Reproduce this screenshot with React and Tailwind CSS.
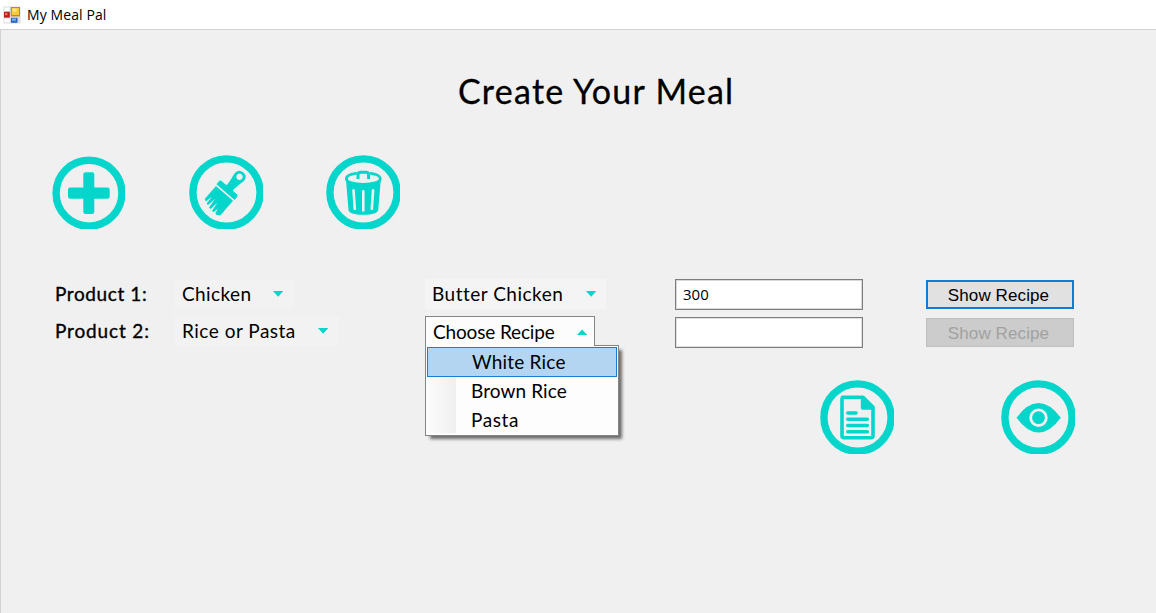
import React from "react";

const TEAL = "#05d6cb";

function RoundIcon({ label, className = "", children }) {
  return (
    <button aria-label={label} className={`block h-[74px] w-[74px] shrink-0 ${className}`}>
      <svg width="74" height="74" viewBox="0 0 74 74" fill={TEAL} className="block overflow-hidden">
        <circle cx="37.5" cy="37.5" r="33.6" fill="none" stroke={TEAL} strokeWidth="7.4" />
        {children}
      </svg>
    </button>
  );
}

function PlusIcon() {
  return (
    <button aria-label="Add product" className="mt-[1px] block h-[73px] w-[73px] shrink-0">
      <svg width="73" height="73" viewBox="0 0 73 73" fill={TEAL} className="block overflow-hidden">
        <circle cx="37" cy="37.2" r="32.9" fill="none" stroke={TEAL} strokeWidth="7.4" />
        <rect x="31.3" y="16.2" width="11" height="41.7" rx="2.2" />
        <rect x="16" y="31.5" width="41.7" height="11.3" rx="2.2" />
      </svg>
    </button>
  );
}

function Arrow({ up = false }) {
  return (
    <svg width="11" height="6" viewBox="0 0 11 6" fill={TEAL} className="block shrink-0">
      <path d={up ? "M0 6 L5 0.5 L10.3 6 Z" : "M0 0 L10.3 0 L5.2 5.8 Z"} />
    </svg>
  );
}

function AppIcon() {
  return (
    <svg width="18" height="18" viewBox="0 0 18 18" className="block">
      <rect x="0.5" y="0.5" width="17" height="17" fill="#dcdcdf" />
      <rect x="1.5" y="1.5" width="5" height="3.5" fill="#fff" />
      <rect x="1.5" y="12.5" width="5" height="4" fill="#fff" />
      <rect x="1" y="5.8" width="5.8" height="5.8" fill="#b81f12" />
      <rect x="2" y="6.8" width="2.5" height="2.5" fill="#e2705d" />
      <rect x="7.8" y="1" width="9.2" height="9.4" fill="#c48a12" />
      <rect x="8.8" y="2" width="7.2" height="7" fill="#f7ca38" />
      <rect x="9.5" y="2.6" width="4" height="3" fill="#ffe688" />
      <rect x="8" y="11.8" width="6.5" height="5" fill="#2b64c8" />
      <rect x="9" y="12.5" width="4" height="2.3" fill="#78aef2" />
    </svg>
  );
}

export default function App() {
  return (
    <div className="flex h-[613px] w-[1156px] flex-col overflow-hidden bg-[#f0f0f0] font-['Comic_Sans_MS',Lato,sans-serif] text-[19px] leading-[30px] text-black">
      <header className="flex h-[29px] shrink-0 items-center bg-white pl-[3px] font-['Open_Sans',sans-serif]">
        <AppIcon />
        <span className="ml-[6px] whitespace-nowrap text-[14px] leading-5 tracking-[0.1px]">My Meal Pal</span>
      </header>

      <main className="flex grow flex-col border-l border-t border-[#d2d2d2]">
        <h1 className="ml-[457px] mt-[41px] h-10 whitespace-nowrap text-[34px] leading-10 tracking-[1.25px] [-webkit-text-stroke:0.3px_black]">Create Your Meal</h1>

        <div className="mt-[44px] flex h-[74px] pl-[51px]">
          <PlusIcon />
          <RoundIcon label="Clear meal" className="ml-[64px]">
            <g transform="translate(37.6 35.9) rotate(41)">
              <path
                fillRule="evenodd"
                d="M-12 1.6 H12 V-2.2 Q12 -4.2 10 -4.2 H5.6 Q4.2 -4.2 4.2 -5.6 L5.4 -13.5 Q9 -24.8 0.6 -24.8 Q-7.8 -24.8 -4.6 -13.5 L-3.6 -5.6 Q-3.6 -4.2 -5 -4.2 H-10 Q-12 -4.2 -12 -2.2 Z M0.5 -22.3 A3.2 3.2 0 1 1 0.49 -22.3 Z"
              />
              <path d="M-11.3 3.2 H11.3 V22 Q8.4 26 6.2 24.2 L5 19 L4.2 24.8 L2 24.4 L0.8 15 L-0.2 24.2 L-2.4 24 L-3.4 13.5 L-4.8 23.2 L-6.8 22.4 L-7.2 14 L-8.8 21.6 L-11.3 20.4 Z" />
            </g>
          </RoundIcon>
          <RoundIcon label="Delete product" className="ml-[63px]">
            <path d="M20 25 Q37.5 33.5 54.8 25 L52.2 55 Q51.5 59.8 37.3 59.8 Q23.2 59.8 22.5 55 Z" />
            <path
              d="M29.8 18.3 C22.8 19.2 20.4 21.6 20.4 23.7 C20.4 27.3 28.5 29.4 37.3 29.4 C46.2 29.4 54.3 27.3 54.3 23.7 C54.3 21.5 51.6 19.3 44.8 18.3"
              fill="#f0f0f0"
              stroke={TEAL}
              strokeWidth="2.8"
              strokeLinecap="round"
            />
            <path d="M32 24 V20 Q32 17.2 34.6 17.2 H40 Q42.6 17.2 42.6 20 V24" fill="none" stroke={TEAL} strokeWidth="3" />
            <path d="M27.5 35.2 L28.8 53.8 M37.3 36.3 V55.5 M47.1 35.2 L45.8 53.8" fill="none" stroke="#f0f0f0" strokeWidth="2.6" strokeLinecap="round" />
          </RoundIcon>
        </div>

        <div className="mt-[50px] flex h-[69px] whitespace-nowrap">
          <div className="flex w-[120px] shrink-0 flex-col gap-[7px] pl-[54px] [-webkit-text-stroke:0.35px_black]">
            <div className="h-[30px] tracking-[0.6px]">Product 1:</div>
            <div className="h-[30px] tracking-[0.85px]">Product 2:</div>
          </div>

          <div className="ml-[53px] flex w-[251px] shrink-0 flex-col items-start gap-[7px]">
            <div className="flex h-[30px] w-[120px] items-center bg-[#f2f2f2] pl-[8px]">
              <span className="w-[91px] tracking-[0.4px]">Chicken</span>
              <Arrow />
            </div>
            <div className="flex h-[30px] w-[165px] items-center bg-[#f2f2f2] pl-[8px]">
              <span className="w-[136px] tracking-[0.5px]">Rice or Pasta</span>
              <Arrow />
            </div>
          </div>

          <div className="flex w-[250px] shrink-0 flex-col items-start gap-[7px]">
            <div className="flex h-[30px] w-[181px] items-center bg-[#f4f4f4] pl-[7px]">
              <span className="w-[154px] tracking-[0.5px]">Butter Chicken</span>
              <Arrow />
            </div>
            <div className="relative z-10 h-[30px] w-[170px] border border-b-0 border-[#858585] bg-[#fcfcfc]">
              <div className="flex h-[29px] items-center pl-[7px]">
                <span className="w-[144px] tracking-[-0.15px]">Choose Recipe</span>
                <Arrow up />
              </div>
              <div className="absolute left-[-1px] top-[28px] -z-10 h-[91px] w-[194px] border border-[#858585] bg-[#fdfdfd] px-[1px] pt-[1px] shadow-[4px_4px_3px_-1px_rgba(0,0,0,0.55)]">
                <div className="flex h-[30px] items-center border border-[#187ed2] bg-[#b3d5f2] pb-[1px] pl-[44px] tracking-[0.2px]">White Rice</div>
                <div className="h-[56px] bg-[linear-gradient(to_right,#fcfcfc_0px,#efefef_29px,#fdfdfd_29px)] pl-[44px]">
                  <div className="h-[29px] leading-[27px] tracking-[0.1px]">Brown Rice</div>
                  <div className="h-[27px] leading-[27px] tracking-[0.6px]">Pasta</div>
                </div>
              </div>
              <div className="absolute left-0 top-[28px] h-px w-[168px] bg-[#fcfcfc]" />
            </div>
          </div>

          <div className="flex w-[251px] shrink-0 flex-col gap-[7px] font-['Open_Sans',sans-serif] text-[15px]">
            <div className="flex h-[31px] w-[188px] items-center border border-[#7d7d7d] bg-white pb-[1px] pl-[7px] outline-1 -outline-offset-2 outline-[#d8d8d8]">300</div>
            <div className="h-[31px] w-[188px] border border-[#7d7d7d] bg-white outline-1 -outline-offset-2 outline-[#e0e0e0]" />
          </div>

          <div className="flex w-[150px] shrink-0 flex-col gap-[9px] pt-[1px] font-['Liberation_Sans',sans-serif] text-[17px] leading-none">
            <button className="flex h-[29px] w-[148px] items-center justify-center border-2 border-[#0f7cd8] bg-[#e1e1e1] pr-[3px] pt-[1px] tracking-[0.1px]">Show Recipe</button>
            <button disabled className="flex h-[29px] w-[148px] items-center justify-center border border-[#bfbfbf] bg-[#cccccc] pr-[3px] pt-[1px] tracking-[0.1px] text-[#a1a1a1]">Show Recipe</button>
          </div>
        </div>

        <div className="mt-[32px] flex pl-[819px]">
          <RoundIcon label="Open document">
            <path d="M22.5 17.3 H43 L53 27.3 V55.7 Q53 57.7 51 57.7 H24 Q22 57.7 22 55.7 V19.3 Q22 17.3 24 17.3 Z" fill="none" stroke={TEAL} strokeWidth="3.6" strokeLinejoin="round" />
            <path d="M40.8 16.2 H44 L54.2 26.5 V29.8 H43.5 Q40.8 29.8 40.8 27.2 Z" />
            <path d="M27.8 33 H36 M27.8 39.3 H47.3 M27.8 45.5 H47.3 M27.8 51.7 H47.3" fill="none" stroke={TEAL} strokeWidth="3.6" strokeLinecap="round" />
          </RoundIcon>
          <RoundIcon label="Preview meal" className="ml-[107px]">
            <path d="M15.6 37.7 Q26 23 37.5 23 Q49 23 59.8 37.7 Q49 52.4 37.5 52.4 Q26 52.4 15.6 37.7 Z" />
            <circle cx="37.5" cy="37.7" r="7.8" fill="none" stroke="#f0f0f0" strokeWidth="2.8" />
          </RoundIcon>
        </div>
      </main>
    </div>
  );
}
